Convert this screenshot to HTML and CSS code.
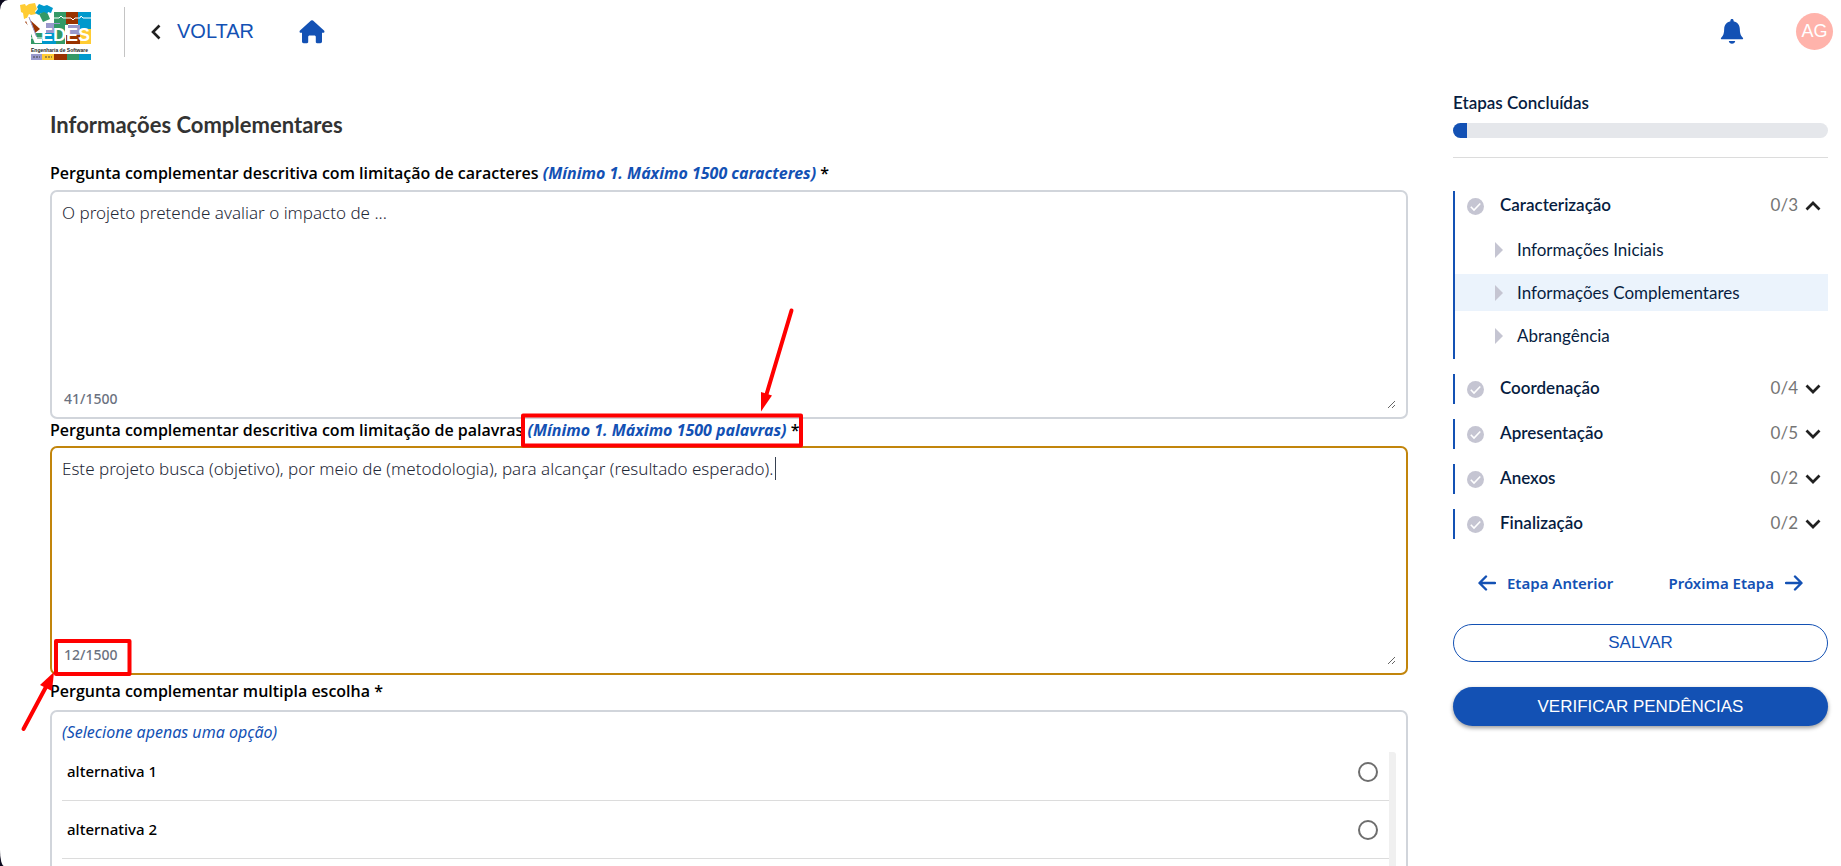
FILE: index.html
```
<!DOCTYPE html>
<html lang="pt-BR">
<head>
    <meta charset="UTF-8">
    <meta name="viewport" content="width=device-width, initial-scale=1.0">
    <title>Informações Complementares</title>
    <link rel="stylesheet" href="styles.css">
</head>
<body>
<div class="page">
    <header class="topbar">
        <a href="#" class="logo" aria-label="LEDES Engenharia de Software">
            <svg width="72" height="58" viewBox="0 0 72 58">
                <!-- mosaico -->
                <path fill="#339966" d="M34 9h14v13H34z"/>
                <path fill="#993300" d="M46 9h13v12H46z"/>
                <path fill="#0099cc" d="M58 9h13v18H58z"/>
                <path fill="#9999cc" d="M26 20h14v12H26zM48 22h12v11H48z"/>
                <path fill="#339966" d="M11 30h14v11H11zM34 21h11v20H34z"/>
                <path fill="#0099cc" d="M22 30h14v11H22z"/>
                <path fill="#993300" d="M46 32h15v9H46z"/>
                <path fill="#ffcc33" d="M60 26h11v15H60z"/>
                <path fill="#ffcc33" d="M0 2l5-1 1 2 3-2 6-1 2 6-2 2 1 3-5 1-2-1-2 4-3 1-1-6-2-1z"/>
                <path fill="#0099cc" d="M19 1l5 2 3-1 6 3-2 5-3-1-1 3-6-2-2 2-4-2 3-4-1-2z"/>
                <path fill="#339966" d="M19 11l5-2 4 2 2 5-7 3z"/>
                <path fill="#993300" d="M5 19l4-3 11 10-5 4z"/>
                <path fill="none" stroke="#fff" stroke-width="4" d="M7 15l9 23h6"/>
                <path fill="none" stroke="#9999cc" stroke-width="1" d="M9 14l8 21"/>
                <path fill="none" stroke="#fff" stroke-width="1" d="M34 15h5l2-2 2 2h8l2 2 2-2h5l1-2 2 2h8M11 35h3l1-2 2 2h6"/>
                <text x="21" y="38" class="logo-name">EDES</text>
                <text x="11" y="49" class="logo-sub">Engenharia de Software</text>
                <path fill="#9999cc" d="M11 51h11v6H11z"/>
                <path fill="#ffcc33" d="M22 51h12v6H22z"/>
                <path fill="#993300" d="M34 51h13v6H34z"/>
                <path fill="#339966" d="M47 51h12v6H47z"/>
                <path fill="#0099cc" d="M59 51h12v6H59z"/>
                <path stroke="#444" stroke-dasharray="2 1" d="M13 54h7M25 54h7"/>
            </svg>
        </a>
        <a href="#" class="back">
            <svg width="10" height="16" viewBox="0 0 10 16"><path d="M8.500 1.500L2 8l6.500 6.500" fill="none" stroke="#212121" stroke-width="2.600"/></svg>
            <span>VOLTAR</span>
        </a>
        <a href="#" class="home" aria-label="Início">
            <svg width="26" height="24" viewBox="0 0 26 24"><path fill="#1351b4" d="M12 .6a1.500 1.500 0 0 1 2 0l11 10c.9.900.4 2.200-.8 2.200H23v8.700c0 1-.8 1.700-1.700 1.700H18c-.7 0-1.200-.5-1.200-1.200V17c0-.8-.6-1.400-1.400-1.400h-4.800c-.8 0-1.400.6-1.400 1.400v5c0 .7-.5 1.200-1.200 1.200H4.700c-1 0-1.700-.7-1.700-1.700v-8.700H1.800C.6 12.800.1 11.500 1 10.600z"/></svg>
        </a>
        <button class="bell" aria-label="Notificações">
            <svg width="24" height="26" viewBox="0 0 24 26"><path fill="#1351b4" d="M12 0c1 0 1.600.7 1.600 1.700v.6c3.800.8 6.200 3.900 6.200 7.500 0 4.700 1 7 2.800 8.800.6.700.9 1.600-.1 1.600h-21c-1 0-.7-.9-.1-1.600 1.800-1.800 2.800-4.100 2.800-8.800 0-3.600 2.400-6.700 6.200-7.500v-.6C10.400.7 11 0 12 0zM8.800 22h6.400c-.3 1.700-1.500 2.800-3.200 2.800S9.100 23.700 8.800 22z"/></svg>
        </button>
        <button class="avatar">AG</button>
    </header>

    <div class="content">
        <main>
            <h1>Informações Complementares</h1>

            <label class="question" for="caracteres">Pergunta complementar descritiva com limitação de caracteres <em>(Mínimo 1. Máximo 1500 caracteres)</em> *</label>
            <div class="field">
                <textarea id="caracteres">O projeto pretende avaliar o impacto de ...</textarea>
                <span class="counter">41/1500</span>
            </div>

            <label class="question" for="palavras">Pergunta complementar descritiva com limitação de palavras <em>(Mínimo 1. Máximo 1500 palavras)</em> *</label>
            <div class="field field-active">
                <textarea id="palavras">Este projeto busca (objetivo), por meio de (metodologia), para alcançar (resultado esperado).</textarea>
                <span class="counter">12/1500</span>
            </div>

            <fieldset class="choices">
                <legend class="question question-choice">Pergunta complementar multipla escolha *</legend>
                <div class="choice-box">
                    <p class="hint">(Selecione apenas uma opção)</p>
                    <div class="options">
                        <div class="option"><label for="alt1">alternativa 1</label><input type="radio" name="alternativa" id="alt1"></div>
                        <div class="option"><label for="alt2">alternativa 2</label><input type="radio" name="alternativa" id="alt2"></div>
                    </div>
                </div>
            </fieldset>
        </main>

        <aside>
            <h2>Etapas Concluídas</h2>
            <div class="progress"><div class="progress-value"></div></div>

            <nav class="steps">
                <section class="step step-open">
                    <button class="step-title">
                        <svg class="check" viewBox="0 0 17 17"><circle cx="8.500" cy="8.500" r="8.500" fill="#c5c5d2"/><path d="M3.800 8.800l3.200 3.200 6.300-6.500" fill="none" stroke="#fff" stroke-width="1.600"/></svg>
                        <span class="step-name">Caracterização</span>
                        <span class="step-count">0/3</span>
                        <svg class="chevron" viewBox="0 0 16 10"><path d="M1.500 8.500L8 2l6.500 6.500" fill="none" stroke="#212121" stroke-width="2.700"/></svg>
                    </button>
                    <a href="#" class="substep">Informações Iniciais</a>
                    <a href="#" class="substep selected">Informações Complementares</a>
                    <a href="#" class="substep">Abrangência</a>
                </section>
                <section class="step">
                    <button class="step-title">
                        <svg class="check" viewBox="0 0 17 17"><circle cx="8.500" cy="8.500" r="8.500" fill="#c5c5d2"/><path d="M3.800 8.800l3.200 3.200 6.300-6.500" fill="none" stroke="#fff" stroke-width="1.600"/></svg>
                        <span class="step-name">Coordenação</span>
                        <span class="step-count">0/4</span>
                        <svg class="chevron" viewBox="0 0 16 10"><path d="M1.500 1.500L8 8l6.500-6.500" fill="none" stroke="#212121" stroke-width="2.700"/></svg>
                    </button>
                </section>
                <section class="step">
                    <button class="step-title">
                        <svg class="check" viewBox="0 0 17 17"><circle cx="8.500" cy="8.500" r="8.500" fill="#c5c5d2"/><path d="M3.800 8.800l3.200 3.200 6.300-6.500" fill="none" stroke="#fff" stroke-width="1.600"/></svg>
                        <span class="step-name">Apresentação</span>
                        <span class="step-count">0/5</span>
                        <svg class="chevron" viewBox="0 0 16 10"><path d="M1.500 1.500L8 8l6.500-6.500" fill="none" stroke="#212121" stroke-width="2.700"/></svg>
                    </button>
                </section>
                <section class="step">
                    <button class="step-title">
                        <svg class="check" viewBox="0 0 17 17"><circle cx="8.500" cy="8.500" r="8.500" fill="#c5c5d2"/><path d="M3.800 8.800l3.200 3.200 6.300-6.500" fill="none" stroke="#fff" stroke-width="1.600"/></svg>
                        <span class="step-name">Anexos</span>
                        <span class="step-count">0/2</span>
                        <svg class="chevron" viewBox="0 0 16 10"><path d="M1.500 1.500L8 8l6.500-6.500" fill="none" stroke="#212121" stroke-width="2.700"/></svg>
                    </button>
                </section>
                <section class="step">
                    <button class="step-title">
                        <svg class="check" viewBox="0 0 17 17"><circle cx="8.500" cy="8.500" r="8.500" fill="#c5c5d2"/><path d="M3.800 8.800l3.200 3.200 6.300-6.500" fill="none" stroke="#fff" stroke-width="1.600"/></svg>
                        <span class="step-name">Finalização</span>
                        <span class="step-count">0/2</span>
                        <svg class="chevron" viewBox="0 0 16 10"><path d="M1.500 1.500L8 8l6.500-6.500" fill="none" stroke="#212121" stroke-width="2.700"/></svg>
                    </button>
                </section>
            </nav>

            <div class="step-nav">
                <button>
                    <svg width="18" height="16" viewBox="0 0 18 16"><path d="M17 8H2M8 1.500L1.500 8 8 14.500" fill="none" stroke="#1351b4" stroke-width="2.400" stroke-linecap="round" stroke-linejoin="round"/></svg>
                    Etapa Anterior
                </button>
                <button>
                    Próxima Etapa
                    <svg width="18" height="16" viewBox="0 0 18 16"><path d="M1 8h15M10 1.500L16.500 8 10 14.500" fill="none" stroke="#1351b4" stroke-width="2.400" stroke-linecap="round" stroke-linejoin="round"/></svg>
                </button>
            </div>
            <button class="btn btn-outline">SALVAR</button>
            <button class="btn btn-primary">VERIFICAR PENDÊNCIAS</button>
        </aside>
    </div>

    <!-- marcações em vermelho e cursor de texto -->
    <svg class="marks" width="820" height="740" viewBox="0 0 820 740" fill="none" stroke="#ff0000" stroke-width="4" stroke-linejoin="round" stroke-linecap="round">
        <path d="M523 415.500h278v30H523z"/>
        <path d="M791.500 310.500L766 396"/>
        <path d="M761 411.500l0-19.500 11 3.500z" fill="#ff0000" stroke="none"/>
        <path d="M56 641h73.500v33H56z"/>
        <path d="M23.500 729L47 685"/>
        <path d="M54 672l-14 13 12 6z" fill="#ff0000" stroke="none"/>
        <path d="M775.500 457v23" stroke="#374151" stroke-width="1" stroke-linecap="butt"/>
    </svg>
</div>
</body>
</html>
```
FILE: styles.css
```
* {
    box-sizing: border-box;
}
body {
    margin: 0;
    background-color: #0c0a1e;
    font-family: "Noto Sans", sans-serif;
    font-size: 15px;
    color: #000;
}
button {
    border: 0;
    padding: 0;
    background: none;
    font-family: inherit;
    cursor: pointer;
}
a {
    text-decoration: none;
}
svg {
    display: block;
    flex: none;
}
.page {
    position: relative;
    height: 100vh;
    overflow: hidden;
    background-color: #fff;
    border-radius: 8px 0 0 4px / 10px 0 0 16px;
}

/* Topo */
.topbar {
    display: flex;
    align-items: center;
    height: 63px;
    padding: 0 8px 0 20px;
}
.logo {
    display: flex;
    align-items: center;
    height: 50px;
    padding-right: 32px;
    border-right: 1px solid #c4c4c4;
}
.logo-name {
    font: bold 18px "Liberation Sans", sans-serif;
    fill: #fff;
}
.logo-sub {
    font: bold 5px "Liberation Sans", sans-serif;
    fill: #222;
}
.back {
    display: flex;
    align-items: center;
    gap: 16px;
    margin-left: 26px;
    font-family: "Liberation Sans", Arial, sans-serif;
    font-size: 20px;
    color: #1351b4;
}
.home {
    margin-left: 45px;
}
.bell {
    margin-left: auto;
}
.avatar {
    width: 37px;
    height: 37px;
    margin-left: 52px;
    border-radius: 50%;
    background-color: #ffb3ab;
    font-family: "Liberation Sans", Arial, sans-serif;
    font-size: 18px;
    color: #fff;
}

/* Conteúdo */
.content {
    display: grid;
    grid-template-columns: 1fr 375px;
    gap: 45px;
    padding: 0 13px 0 50px;
}
h1 {
    margin: 47px 0 20px;
    font-family: Lato, sans-serif;
    font-size: 22px;
    line-height: 30px;
    color: #333;
}
.question {
    display: block;
    height: 27px;
    padding: 0;
    font-family: "Open Sans", sans-serif;
    font-size: 16px;
    font-weight: 600;
    line-height: 23px;
}
h1 + .question {
    height: 30px;
    line-height: 27px;
}
.question em {
    font-family: "Noto Sans", sans-serif;
    font-weight: 700;
    color: #1351b4;
}
.field {
    position: relative;
    height: 229px;
    padding: 8px 10px;
    border: 2px solid #d1d5db;
    border-radius: 7px;
}
.field-active {
    border-color: #c2850c;
}
textarea {
    display: block;
    width: 100%;
    height: 100%;
    padding: 0;
    border: 0;
    outline: 0;
    resize: vertical;
    background: none;
    font-family: "Noto Sans", sans-serif;
    font-size: 17px;
    font-weight: 300;
    line-height: 26px;
    color: #1f2937;
}
.counter {
    position: absolute;
    left: 12px;
    bottom: 8px;
    font-size: 14px;
    font-weight: 500;
    line-height: 20px;
    color: #6b7280;
}
.choices {
    min-width: 0;
    margin: 0;
    padding: 0;
    border: 0;
}
.question-choice {
    height: 35px;
    line-height: 33px;
}
.choice-box {
    height: 229px;
    padding: 8px 10px;
    border: 2px solid #d1d5db;
    border-radius: 7px;
}
.hint {
    margin: 0 0 8px;
    font-size: 16px;
    font-style: italic;
    line-height: 24px;
    color: #1351b4;
}
.options {
    height: 180px;
    border-right: 7px solid #f0f0f0;
    border-top-right-radius: 3px;
}
.option {
    display: flex;
    align-items: center;
    justify-content: space-between;
    padding: 18px 11px 18px 5px;
    border-bottom: 1px solid #dcdcdc;
    font-size: 15px;
    font-weight: 500;
    line-height: 21px;
}
.option:first-child {
    padding-top: 9px;
}
.option input {
    appearance: none;
    width: 20px;
    height: 20px;
    margin: 0;
    border: 2px solid #6e6e6e;
    border-radius: 50%;
}

/* Etapas */
aside {
    font-family: Lato, sans-serif;
    color: #071d41;
}
h2 {
    margin: 29px 0 9px;
    font-size: 17px;
    font-weight: 600;
    line-height: 22px;
}
.progress {
    height: 15px;
    border-radius: 8px;
    background-color: #e5e7eb;
    overflow: hidden;
}
.progress-value {
    width: 14px;
    height: 100%;
    background-color: #1351b4;
}
.steps {
    display: flex;
    flex-direction: column;
    gap: 15px;
    margin-top: 19px;
    padding-top: 33px;
    border-top: 1px solid #dcdcdc;
}
.step {
    border-left: 2px solid #1351b4;
}
.step-open {
    display: grid;
    gap: 6px;
    padding-bottom: 5px;
}
.step-title {
    display: flex;
    align-items: center;
    width: 100%;
    height: 30px;
    padding: 0 7px 0 12px;
    font-size: 17px;
    font-weight: 600;
    line-height: 20px;
    color: #071d41;
}
.step-open .step-title {
    margin-bottom: 4px;
}
.check {
    width: 17px;
    height: 17px;
    margin-right: 16px;
}
.step-name,
.step-count {
    padding-bottom: 2px;
}
.step-count {
    margin-left: auto;
    font-weight: 400;
    color: #757575;
}
.chevron {
    width: 16px;
    height: 10px;
    margin-left: 7px;
}
.substep {
    display: flex;
    align-items: center;
    gap: 14px;
    height: 37px;
    padding-left: 40px;
    font-size: 17px;
    line-height: 20px;
    color: #071d41;
}
.substep::before {
    content: "";
    border: 8px solid transparent;
    border-left-color: #c5c5d2;
    border-right-width: 0;
}
.selected {
    background-color: #ebf3fc;
}
.step-nav {
    display: flex;
    justify-content: space-between;
    margin: 33px 25px 30px;
}
.step-nav button {
    display: flex;
    align-items: center;
    gap: 11px;
    font-family: "Noto Sans", sans-serif;
    font-size: 15px;
    font-weight: 600;
    line-height: 22px;
    color: #1351b4;
}
.btn {
    display: block;
    width: 100%;
    height: 38px;
    border-radius: 20px;
    font-family: "Liberation Sans", Arial, sans-serif;
    font-size: 17px;
}
.btn-outline {
    border: 1px solid #1351b4;
    color: #1351b4;
}
.btn-primary {
    height: 39px;
    margin-top: 25px;
    background-color: #1351b4;
    box-shadow: 0 2px 4px rgba(0, 0, 0, 0.4);
    color: #fff;
}

.marks {
    position: absolute;
    top: 0;
    left: 0;
    pointer-events: none;
}

@media (max-width: 900px) {
    .content {
        grid-template-columns: 1fr;
    }
    .page {
        height: auto;
    }
    .marks {
        display: none;
    }
}
```
